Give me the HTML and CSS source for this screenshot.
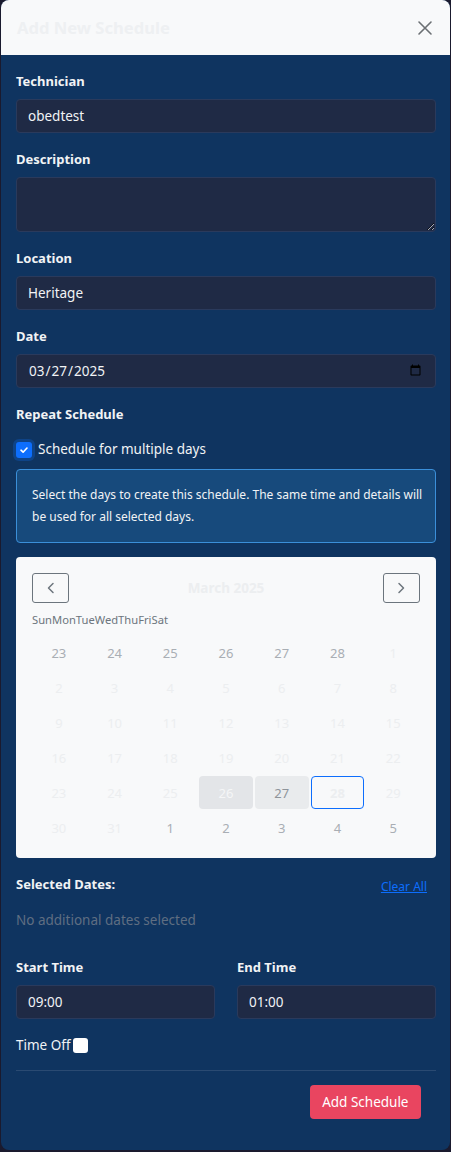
FILE: index.html
```html
<!DOCTYPE html>
<html lang="en">
<head>
<meta charset="utf-8">
<title>Add New Schedule</title>
<link rel="stylesheet" href="styles.css">
</head>
<body>
<div class="modal">
  <div class="modal-header">
    <h5 class="modal-title">Add New Schedule</h5>
    <button class="close-btn" aria-label="Close">
      <svg width="16" height="16" viewBox="0 0 16 16"><path d="M2 2L14 14M14 2L2 14" stroke="#6b6f73" stroke-width="1.6" stroke-linecap="round"/></svg>
    </button>
  </div>
  <div class="modal-body">
    <div class="group">
      <label class="label">Technician</label>
      <input class="field" type="text" value="obedtest">
    </div>
    <div class="group">
      <label class="label">Description</label>
      <textarea class="field area"></textarea>
    </div>
    <div class="group">
      <label class="label">Location</label>
      <input class="field" type="text" value="Heritage">
    </div>
    <div class="group">
      <label class="label">Date</label>
      <input class="field date" type="date" value="2025-03-27">
    </div>
    <div class="group-tight">
      <label class="label">Repeat Schedule</label>
    </div>
    <div class="check-row">
      <span class="checkbox checked">
        <svg width="10" height="10" viewBox="0 0 10 10"><path d="M2 5.2L4.1 7.2L8 3" fill="none" stroke="#fff" stroke-width="1.6" stroke-linecap="round" stroke-linejoin="round"/></svg>
      </span>
      <span>Schedule for multiple days</span>
    </div>
    <div class="info">Select the days to create this schedule. The same time and details will be used for all selected days.</div>

    <div class="calendar">
      <div class="cal-head">
        <button class="nav-btn" aria-label="Previous month">
          <svg width="12" height="12" viewBox="0 0 12 12"><path d="M8 1.5L3.5 6L8 10.5" fill="none" stroke="#6c757d" stroke-width="1.5" stroke-linecap="round" stroke-linejoin="round"/></svg>
        </button>
        <div class="cal-title">March 2025</div>
        <button class="nav-btn" aria-label="Next month">
          <svg width="12" height="12" viewBox="0 0 12 12"><path d="M4 1.5L8.5 6L4 10.5" fill="none" stroke="#6c757d" stroke-width="1.5" stroke-linecap="round" stroke-linejoin="round"/></svg>
        </button>
      </div>
      <div class="weekdays"><span>Sun</span><span>Mon</span><span>Tue</span><span>Wed</span><span>Thu</span><span>Fri</span><span>Sat</span></div>
      <div class="grid">
        <div class="day other">23</div><div class="day other">24</div><div class="day other">25</div><div class="day other">26</div><div class="day other">27</div><div class="day other">28</div><div class="day">1</div>
        <div class="day">2</div><div class="day">3</div><div class="day">4</div><div class="day">5</div><div class="day">6</div><div class="day">7</div><div class="day">8</div>
        <div class="day">9</div><div class="day">10</div><div class="day">11</div><div class="day">12</div><div class="day">13</div><div class="day">14</div><div class="day">15</div>
        <div class="day">16</div><div class="day">17</div><div class="day">18</div><div class="day">19</div><div class="day">20</div><div class="day">21</div><div class="day">22</div>
        <div class="day">23</div><div class="day">24</div><div class="day">25</div><div class="day past">26</div><div class="day selected">27</div><div class="day today">28</div><div class="day">29</div>
        <div class="day">30</div><div class="day">31</div><div class="day other">1</div><div class="day other">2</div><div class="day other">3</div><div class="day other">4</div><div class="day other">5</div>
      </div>
    </div>

    <div class="selected-head">
      <span class="label">Selected Dates:</span>
      <a class="clear-link" href="#">Clear All</a>
    </div>
    <div class="muted">No additional dates selected</div>

    <div class="times">
      <div>
        <label class="label">Start Time</label>
        <input class="field" type="text" value="09:00">
      </div>
      <div>
        <label class="label">End Time</label>
        <input class="field" type="text" value="01:00">
      </div>
    </div>

    <div class="timeoff">
      <span>Time Off</span>
      <span class="checkbox white"></span>
    </div>

    <div class="footer">
      <button class="primary">Add Schedule</button>
    </div>
  </div>
</div>
</body>
</html>
```
FILE: styles.css
```css
* { box-sizing: border-box; }
html, body { margin: 0; padding: 0; }
body {
  background: #1a1a2e;
  font-family: "Noto Sans", "Open Sans", sans-serif;
  font-size: 13px;
  color: #ffffff;
  height: 1152px;
  overflow: hidden;
}
.modal {
  margin: 0 1px 0 1px;
  height: 1150px;
  background: #0f3460;
  border-radius: 8px;
  overflow: hidden;
}
.modal-header {
  height: 55px;
  background: #f8f9fa;
  display: flex;
  align-items: center;
  justify-content: space-between;
  padding: 0 13px 0 16px;
}
.modal-title {
  margin: 0;
  font-size: 16.6px;
  font-weight: 700;
  color: #eef0f2;
}
.close-btn {
  background: none;
  border: 0;
  padding: 4px;
  display: flex;
}
.modal-body { padding: 16px 14px 0 15px; }
.label {
  display: block;
  font-weight: 700;
  font-size: 13px;
  line-height: 21px;
  margin-bottom: 7px;
  color: #f1f3f5;
}
.group { margin-bottom: 16px; }
.group-tight .label { margin-bottom: 0; }
.field {
  display: block;
  width: 100%;
  height: 34px;
  background: #1f2a45;
  border: 1px solid #2a3a5c;
  border-radius: 4px;
  color: #f1f3f5;
  font-family: inherit;
  font-size: 13.5px;
  padding: 0 11px;
  outline: none;
}
.field.area { height: 55px; resize: vertical; padding: 8px 11px; }
.field.date { color-scheme: light; }
.field.date::-webkit-calendar-picker-indicator { opacity: 1; }
.check-row {
  display: flex;
  align-items: center;
  gap: 6px;
  margin-top: 14px;
  line-height: 21px;
  font-size: 13.5px;
  color: #f1f3f5;
}
.checkbox {
  width: 16px;
  height: 16px;
  border-radius: 3px;
  display: inline-flex;
  align-items: center;
  justify-content: center;
}
.checkbox.checked {
  background: #0d6efd;
  box-shadow: 0 0 0 3px rgba(13, 110, 253, 0.25);
}
.checkbox.white {
  background: #ffffff;
  width: 15px;
  height: 15px;
}
.info {
  margin-top: 9px;
  background: #174a7c;
  border: 1px solid #3b8fd9;
  border-radius: 4px;
  padding: 14px 10px 14px 15px;
  font-size: 12px;
  line-height: 22px;
  color: #f1f3f5;
}
.calendar {
  margin-top: 14px;
  background: #f8f9fa;
  border-radius: 4px;
  padding: 16px 16px 14px 16px;
}
.cal-head {
  display: flex;
  align-items: center;
  justify-content: space-between;
}
.nav-btn {
  width: 37px;
  height: 30px;
  border: 1px solid #6c757d;
  border-radius: 3px;
  background: transparent;
  display: flex;
  align-items: center;
  justify-content: center;
  padding: 0;
}
.cal-title {
  font-weight: 700;
  font-size: 13.5px;
  color: #eceef0;
}
.weekdays {
  display: flex;
  margin-top: 8px;
  font-size: 11.2px;
  line-height: 18px;
  color: #6c757d;
}
.grid {
  margin-top: 7px;
  display: grid;
  grid-template-columns: repeat(7, 1fr);
  gap: 2px;
}
.day {
  height: 33px;
  display: flex;
  align-items: center;
  justify-content: center;
  font-size: 13px;
  color: #eceef0;
  border-radius: 4px;
  border: 1px solid transparent;
}
.day.other { color: #a9aeb4; }
.day.past { background: #e3e5e8; color: #f5f6f7; }
.day.selected { background: #e9ebed; color: #8e949a; }
.day.today { border-color: #0d6efd; color: #eceef0; font-weight: 700; }
.selected-head {
  margin-top: 16px;
  display: flex;
  justify-content: space-between;
  align-items: flex-start;
}
.selected-head .label { margin-bottom: 0; }
.clear-link {
  color: #0d6efd;
  font-size: 12px;
  line-height: 21px;
  margin-top: 2px;
  margin-right: 9px;
  text-decoration: underline;
}
.muted {
  margin-top: 13px;
  font-size: 13.5px;
  line-height: 21px;
  color: #5f6e82;
}
.times {
  margin-top: 26px;
  display: grid;
  grid-template-columns: 1fr 1fr;
  gap: 22px;
}
.timeoff {
  margin-top: 16px;
  display: flex;
  align-items: center;
  gap: 2px;
  font-size: 13.5px;
  line-height: 21px;
  color: #f1f3f5;
}
.footer {
  margin-top: 14px;
  border-top: 1px solid #2a4a72;
  padding-top: 14px;
  display: flex;
  justify-content: flex-end;
  padding-right: 15px;
}
.primary {
  background: #e94560;
  color: #ffffff;
  border: 0;
  border-radius: 4px;
  height: 34px;
  padding: 0 12.5px;
  font-family: inherit;
  font-size: 13.5px;
}
```
